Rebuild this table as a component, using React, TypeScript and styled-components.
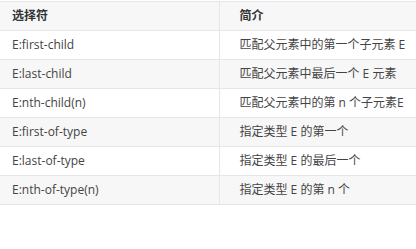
import React from "react";
import styled, { createGlobalStyle } from "styled-components";

const Global = createGlobalStyle`
  html, body { margin: 0; padding: 0; background: #fff; }
  body { font-family: "Open Sans", "Noto Sans CJK SC", sans-serif; }
`;

const Table = styled.table`
  width: 416px;
  margin-top: 1px;
  border-collapse: collapse;
  table-layout: fixed;
  font-size: 12px;
  color: #444;
`;

const Row = styled.tr<{ $shade: boolean }>`
  background: ${(p) => (p.$shade ? "#f7f7f7" : "#fff")};
  border-top: 1px solid #e6e6e6;
  border-bottom: 1px solid #e6e6e6;
`;

const Cell = styled.td<{ $first?: boolean }>`
  height: 28px;
  padding: 0 0 0 ${(p) => (p.$first ? "12px" : "20px")};
  width: ${(p) => (p.$first ? "219px" : "auto")};
  border-right: ${(p) => (p.$first ? "1px solid #e6e6e6" : "none")};
  white-space: nowrap;
  vertical-align: middle;
  line-height: 28px;
  box-sizing: border-box;
`;

const HeadCell = styled(Cell).attrs({ as: "th" })`
  font-weight: 700;
  color: #333;
  text-align: left;
`;

const rows: [string, string][] = [
  ["E:first-child", "匹配父元素中的第一个子元素 E"],
  ["E:last-child", "匹配父元素中最后一个 E 元素"],
  ["E:nth-child(n)", "匹配父元素中的第 n 个子元素E"],
  ["E:first-of-type", "指定类型 E 的第一个"],
  ["E:last-of-type", "指定类型 E 的最后一个"],
  ["E:nth-of-type(n)", "指定类型 E 的第 n 个"],
];

export default function App() {
  return (
    <>
      <Global />
      <Table>
        <thead>
          <Row $shade>
            <HeadCell $first>选择符</HeadCell>
            <HeadCell>简介</HeadCell>
          </Row>
        </thead>
        <tbody>
          {rows.map(([a, b], i) => (
            <Row key={a} $shade={i % 2 === 1}>
              <Cell $first>{a}</Cell>
              <Cell>{b}</Cell>
            </Row>
          ))}
        </tbody>
      </Table>
    </>
  );
}
